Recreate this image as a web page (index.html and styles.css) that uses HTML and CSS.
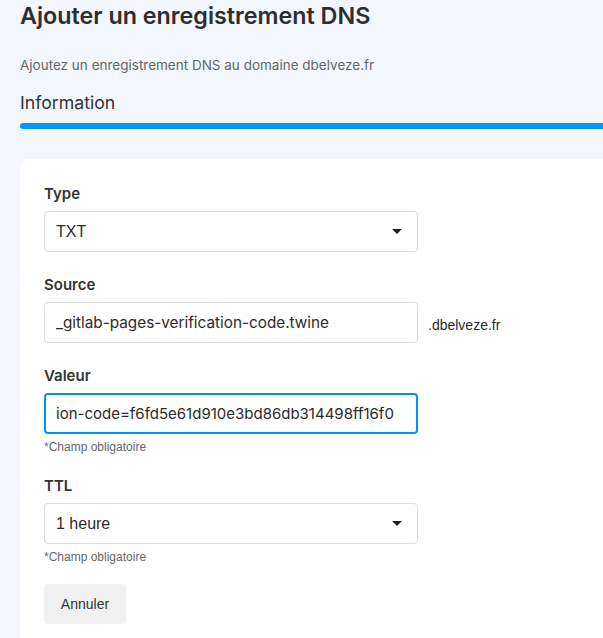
FILE: index.html
```html
<!DOCTYPE html>
<html lang="fr">
<head>
<meta charset="utf-8">
<title>Ajouter un enregistrement DNS</title>
<link rel="stylesheet" href="styles.css">
</head>
<body>
<div class="page">
  <h1 class="title">Ajouter un enregistrement DNS</h1>
  <p class="subtitle">Ajoutez un enregistrement DNS au domaine dbelveze.fr</p>
  <h2 class="step">Information</h2>
  <div class="progress"></div>
  <div class="card">
    <div class="field">
      <label class="label">Type</label>
      <div class="control select">
        <span class="value">TXT</span>
        <span class="caret"></span>
      </div>
    </div>
    <div class="field">
      <label class="label">Source</label>
      <div class="row">
        <div class="control"><span class="value src">_gitlab-pages-verification-code.twine</span></div>
        <span class="suffix">.dbelveze.fr</span>
      </div>
    </div>
    <div class="field with-hint">
      <label class="label">Valeur</label>
      <div class="control focused"><span class="value">ion-code=f6fd5e61d910e3bd86db314498ff16f0</span></div>
      <div class="hint">*Champ obligatoire</div>
    </div>
    <div class="field last">
      <label class="label">TTL</label>
      <div class="control select">
        <span class="value">1 heure</span>
        <span class="caret"></span>
      </div>
      <div class="hint">*Champ obligatoire</div>
    </div>
    <button class="btn">Annuler</button>
  </div>
</div>
</body>
</html>
```
FILE: styles.css
```css
html, body {
  margin: 0;
  padding: 0;
  background: #f3f6fd;
  height: 100%;
  overflow: hidden;
}
.page {
  padding: 0 0 0 20px;
  font-family: Inter, "Liberation Sans", sans-serif;
  color: #333;
}
.title {
  margin: 0;
  padding-top: 1px;
  font-size: 23.3px;
  line-height: 30px;
  font-weight: 600;
  color: #2e2e2e;
}
.subtitle {
  margin: 25px 0 0;
  font-size: 13.5px;
  line-height: 18px;
  color: #666;
}
.step {
  margin: 17px 0 0;
  font-size: 17.7px;
  line-height: 24px;
  font-weight: 400;
  color: #333;
}
.progress {
  margin-top: 8px;
  height: 6px;
  background: #0099ff;
  border-radius: 3px 0 0 3px;
}
.card {
  margin-top: 30px;
  background: #fff;
  border-radius: 8px 0 0 0;
  padding: 26px 24px 30px;
  min-height: 500px;
}
.field {
  margin-bottom: 24px;
}
.field.with-hint {
  margin-bottom: 23px;
}
.field.last {
  margin-bottom: 0;
}
.label {
  display: block;
  font-size: 15px;
  line-height: 18px;
  font-weight: 600;
  color: #333;
  margin-bottom: 8px;
}
.row {
  display: flex;
  align-items: center;
  gap: 10px;
}
.control {
  box-sizing: border-box;
  width: 374px;
  height: 41px;
  border: 1px solid #dcdcdc;
  border-radius: 4px;
  display: flex;
  align-items: center;
  padding: 0 11px;
  background: #fff;
}
.control.focused {
  border: 2px solid #0096f0;
  padding: 0 10px;
}
.value {
  font-size: 15px;
  color: #2b2b2b;
  white-space: nowrap;
  overflow: hidden;
  flex: 1;
}
.value.src {
  font-size: 15.3px;
}
.select .value {
  font-family: "Liberation Sans", Arial, sans-serif;
  font-size: 16px;
}
.caret {
  width: 0;
  height: 0;
  border-left: 5px solid transparent;
  border-right: 5px solid transparent;
  border-top: 5px solid #222;
  margin-right: 4px;
}
.suffix {
  font-family: "Liberation Sans", Arial, sans-serif;
  font-size: 14px;
  color: #2b2b2b;
  margin-top: 4px;
}
.hint {
  margin-top: 6px;
  font-family: "Liberation Sans", Arial, sans-serif;
  font-size: 12px;
  color: #666;
}
.btn {
  display: block;
  width: 82px;
  height: 40px;
  margin-top: 20px;
  border: none;
  border-radius: 4px;
  background: #f0f0f0;
  font-family: "Liberation Sans", Arial, sans-serif;
  font-size: 14px;
  color: #333;
}
```
